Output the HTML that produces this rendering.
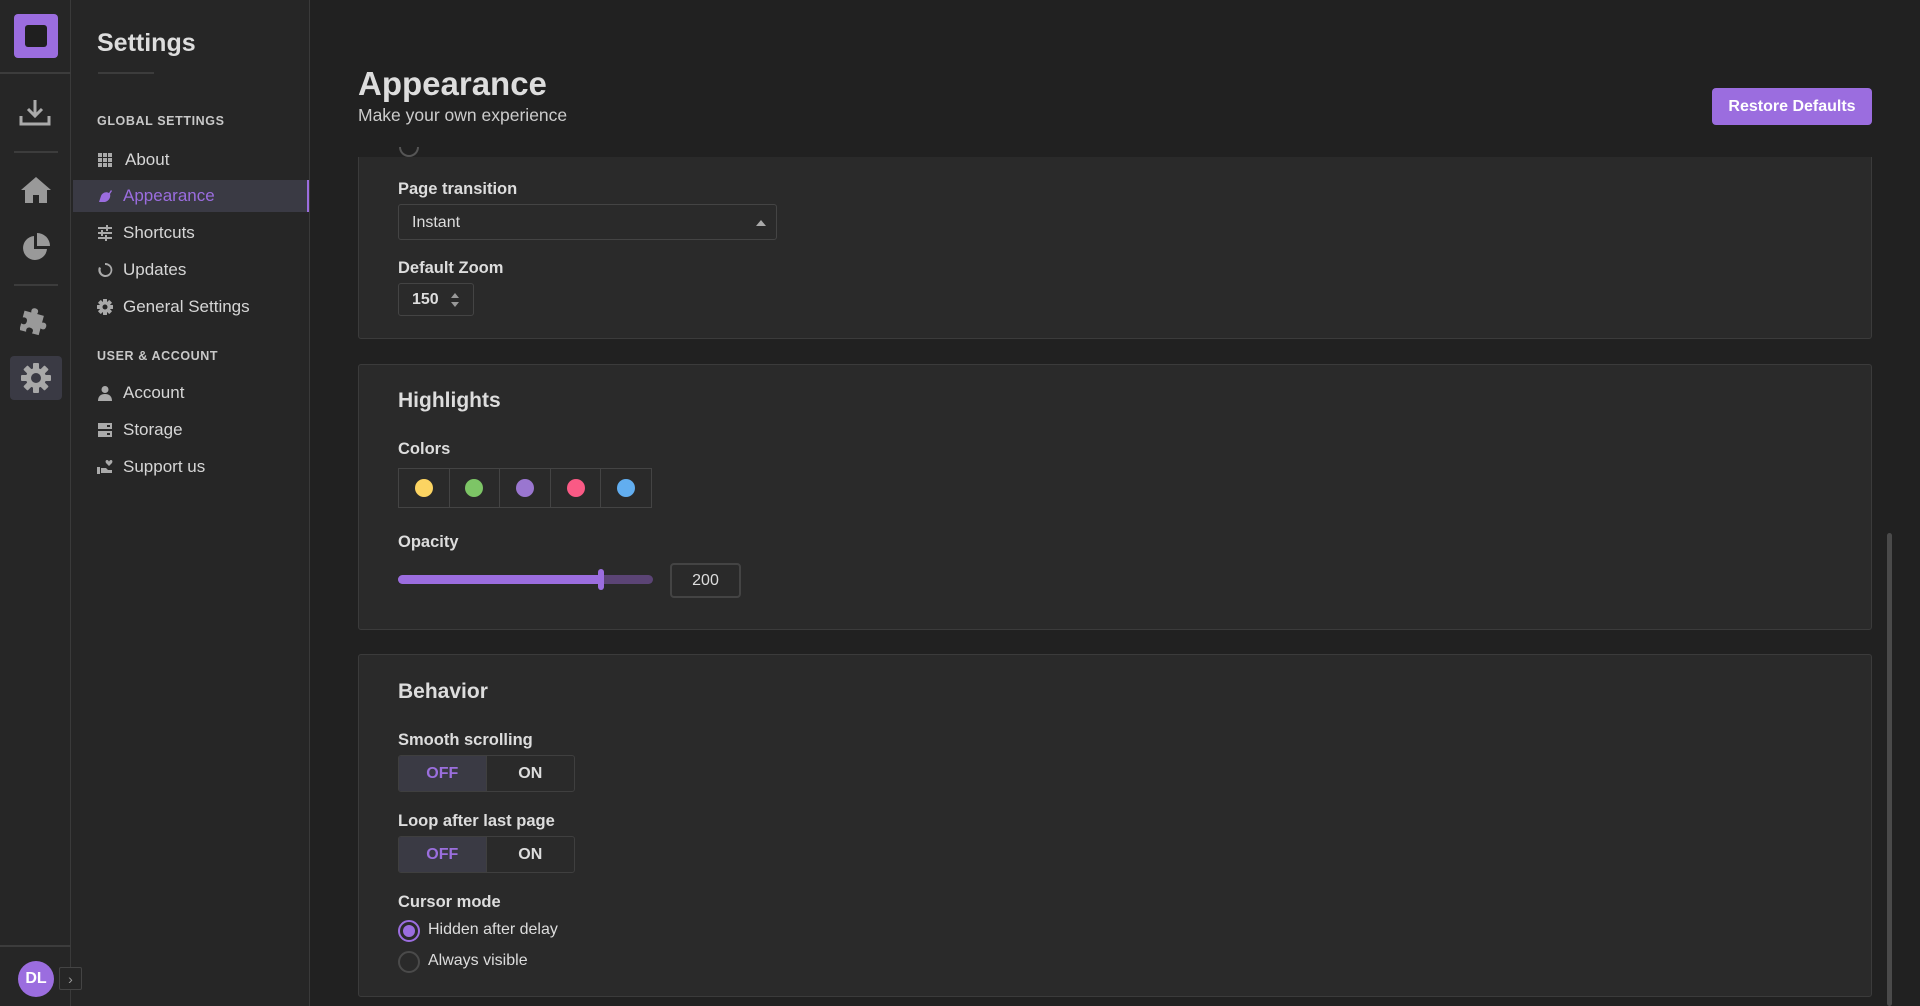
<!DOCTYPE html>
<html><head><meta charset="utf-8"><style>
*{box-sizing:border-box;margin:0;padding:0}
body{width:1920px;height:1006px;overflow:hidden;background:#212121;font-family:"Liberation Sans",sans-serif;color:#ddd;position:relative}
.rail{position:absolute;left:0;top:0;width:71px;height:1006px;background:#262626;border-right:1px solid #3a3a3a}
.side{position:absolute;left:71px;top:0;width:239px;height:1006px;background:#262626;border-right:1px solid #3a3a3a}
.abs{position:absolute}
.hr{position:absolute;background:#3c3c3c;height:2px}
.navi{position:absolute;left:97px;font-size:17px;color:#d6d6d6;display:flex;align-items:center;gap:10px}
.navi svg{width:16px;height:16px;fill:#aaa}
.sec{position:absolute;left:97px;font-size:12.5px;font-weight:bold;letter-spacing:.6px;color:#c8c8c8}
.card{position:absolute;left:358px;width:1514px;background:#2a2a2a;border:1px solid #3b3b3b;border-radius:3px}
.lbl{position:absolute;left:398px;font-size:16.5px;font-weight:bold;color:#ddd}
.h2{position:absolute;left:398px;font-size:21px;font-weight:bold;color:#ddd}
.tog{position:absolute;left:398px;width:177px;height:37px;border:1px solid #3f3f3f;border-radius:3px;display:flex;overflow:hidden}
.tog div{width:50%;display:flex;align-items:center;justify-content:center;font-weight:bold;font-size:16px;color:#ddd}
.tog div:first-child{background:#3a3a44;color:#9b6fde;border-right:1px solid #3f3f3f}
</style></head><body>
<div class="rail">
  <div class="abs" style="left:14px;top:14px;width:44px;height:44px;background:#9b6ddf;border-radius:4px"><div class="abs" style="left:11px;top:11px;width:22px;height:22px;background:#1f1f1f;border-radius:3px"></div></div>
  <div class="hr" style="left:0;top:72px;width:71px"></div>
  <svg class="abs" style="left:19px;top:98px" width="32" height="30" viewBox="0 0 32 30"><path d="M16 2v16M9 11l7 7 7-7" stroke="#aaa" stroke-width="3" fill="none"/><path d="M2 18v8h28v-8" stroke="#aaa" stroke-width="3" fill="none"/></svg>
  <div class="hr" style="left:14px;top:151px;width:44px"></div>
  <svg class="abs" style="left:20px;top:175px" width="32" height="30" viewBox="0 0 32 30"><path d="M16 2L1 15h4v13h8v-8h6v8h8V15h4z" fill="#999"/></svg>
  <svg class="abs" style="left:21px;top:232px" width="30" height="30" viewBox="0 0 30 30"><path d="M13 4a12 12 0 1 0 13 13H13z" fill="#999"/><path d="M16 1v13h13A13 13 0 0 0 16 1z" fill="#999"/></svg>
  <div class="hr" style="left:14px;top:284px;width:44px"></div>
  <svg class="abs" style="left:20px;top:306px" width="32" height="32" viewBox="0 0 32 32"><path d="M12 3c3 0 4 2 3 5h7v7c3-1 5 0 5 3s-2 4-5 3v7h-7c1-3 0-5-3-5s-4 2-3 5H2v-7c3 1 5 0 5-3s-2-4-5-3V8h7c-1-3 0-5 3-5z" fill="#999" transform="rotate(15 16 16)"/></svg>
  <div class="abs" style="left:10px;top:356px;width:52px;height:44px;background:#3a3a44;border-radius:4px"></div>
  <svg class="abs" style="left:20px;top:362px" width="32" height="32" viewBox="0 0 32 32"><g fill="#a8a8a8"><circle cx="16" cy="16" r="10"/><rect x="13" y="1" width="6" height="30" rx="1"/><rect x="13" y="1" width="6" height="30" rx="1" transform="rotate(45 16 16)"/><rect x="13" y="1" width="6" height="30" rx="1" transform="rotate(90 16 16)"/><rect x="13" y="1" width="6" height="30" rx="1" transform="rotate(135 16 16)"/></g><circle cx="16" cy="16" r="5" fill="#3a3a44"/></svg>
  <div class="hr" style="left:0;top:945px;width:71px"></div>
  <div class="abs" style="left:18px;top:961px;width:36px;height:36px;border-radius:50%;background:#9b6ddf;color:#fff;font-weight:bold;font-size:16px;display:flex;align-items:center;justify-content:center">DL</div>
</div>
<div class="side">
  <div class="abs" style="left:26px;top:29px;font-size:25px;font-weight:bold;color:#ddd">Settings</div>
  <div class="hr" style="left:27px;top:72px;width:56px"></div>
</div>
<div class="abs" style="left:59px;top:967px;width:23px;height:23px;border:1px solid #444;border-radius:2px;background:#262626;color:#999;font-size:14px;display:flex;align-items:center;justify-content:center">›</div>
<div class="sec" style="top:114px">GLOBAL SETTINGS</div>
<div class="navi" style="top:150px"><svg viewBox="0 0 16 16"><g><rect x="1" y="1" width="4" height="4"/><rect x="6" y="1" width="4" height="4"/><rect x="11" y="1" width="4" height="4"/><rect x="1" y="6" width="4" height="4"/><rect x="6" y="6" width="4" height="4"/><rect x="11" y="6" width="4" height="4"/><rect x="1" y="11" width="4" height="4"/><rect x="6" y="11" width="4" height="4"/><rect x="11" y="11" width="4" height="4"/></g></svg><span style="margin-left:2px">About</span></div>
<div class="abs" style="left:73px;top:180px;width:236px;height:32px;background:#3a3a44;border-right:2px solid #9b6ddf"></div>
<div class="navi" style="top:186px;color:#9b6ddf"><svg viewBox="0 0 16 16" style="fill:#9b6ddf"><path d="M2 14l2-6c1-3 5-5 8-3l2-3 1 1-2 3c1 3-1 7-5 8z"/></svg>Appearance</div>
<div class="navi" style="top:223px"><svg viewBox="0 0 16 16"><rect x="1" y="2" width="14" height="2"/><rect x="1" y="7" width="14" height="2"/><rect x="1" y="12" width="14" height="2"/><rect x="9" y="0" width="2" height="6"/><rect x="4" y="5" width="2" height="6"/><rect x="8" y="10" width="2" height="6"/></svg>Shortcuts</div>
<div class="navi" style="top:260px"><svg viewBox="0 0 16 16"><path d="M8 1a7 7 0 1 1-6 4l2 1a5 5 0 1 0 4-3V1z"/><circle cx="8" cy="8.5" r="3" fill="#262626"/></svg>Updates</div>
<div class="navi" style="top:297px"><svg viewBox="0 0 32 32"><g fill="#aaa"><circle cx="16" cy="16" r="11"/><rect x="12" y="0" width="8" height="32" rx="1"/><rect x="12" y="0" width="8" height="32" rx="1" transform="rotate(45 16 16)"/><rect x="12" y="0" width="8" height="32" rx="1" transform="rotate(90 16 16)"/><rect x="12" y="0" width="8" height="32" rx="1" transform="rotate(135 16 16)"/></g><circle cx="16" cy="16" r="5" fill="#262626"/></svg>General Settings</div>
<div class="sec" style="top:349px">USER &amp; ACCOUNT</div>
<div class="navi" style="top:383px"><svg viewBox="0 0 16 16"><circle cx="8" cy="4.5" r="3.5"/><path d="M1 16c0-5 3-7 7-7s7 2 7 7z"/></svg>Account</div>
<div class="navi" style="top:420px"><svg viewBox="0 0 16 16"><rect x="1" y="1" width="14" height="6"/><rect x="1" y="9" width="14" height="6"/><rect x="10" y="3" width="3" height="2" fill="#262626"/><rect x="10" y="11" width="3" height="2" fill="#262626"/></svg>Storage</div>
<div class="navi" style="top:457px"><svg viewBox="0 0 16 16"><rect x="0" y="8" width="3" height="7"/><path d="M4 9h5l2 2h4v3H4z"/><path d="M10 1c1 0 2 1 2 2 0-1 1-2 2-2 1 0 2 1 1 3l-3 3-3-3c-1-2 0-3 1-3z"/></svg>Support us</div>

<div class="card" style="top:140px;height:199px"></div>
<div class="abs" style="top:0;height:157px;background:#212121;left:311px;width:1609px"></div>
<div class="abs" style="left:358px;top:65px;font-size:33px;font-weight:bold;color:#ddd">Appearance</div>
<div class="abs" style="left:358px;top:105px;font-size:17.5px;color:#ccc">Make your own experience</div>
<div class="abs" style="left:1712px;top:88px;width:160px;height:37px;background:#9b6ddf;border-radius:4px;color:#fff;font-weight:bold;font-size:16px;display:flex;align-items:center;justify-content:center">Restore Defaults</div>
<div class="abs" style="left:399px;top:147px;width:20px;height:10px;border:2px solid #555;border-top:none;border-radius:0 0 10px 10px"></div>
<div class="lbl" style="top:180px">Page transition</div>
<div class="abs" style="left:398px;top:204px;width:379px;height:36px;border:1px solid #444;border-radius:3px;font-size:16px;color:#ddd;padding:9px 13px">Instant<span style="position:absolute;right:10px;top:15px;border:5px solid transparent;border-bottom:6px solid #aaa;border-top:none"></span></div>
<div class="lbl" style="top:259px">Default Zoom</div>
<div class="abs" style="left:398px;top:283px;width:76px;height:33px;border:1px solid #444;border-radius:3px;font-size:16px;font-weight:bold;color:#ddd;padding:7px 13px">150<span style="position:absolute;left:52px;top:9px;border:4px solid transparent;border-bottom:5px solid #999;border-top:none"></span><span style="position:absolute;left:52px;top:18px;border:4px solid transparent;border-top:5px solid #999;border-bottom:none"></span></div>

<div class="card" style="top:364px;height:266px"></div>
<div class="h2" style="top:389px">Highlights</div>
<div class="lbl" style="top:440px">Colors</div>
<div class="abs" style="left:398px;top:468px;width:254px;height:40px;border:1px solid #444;display:flex">
<div style="flex:1;border-right:1px solid #444;display:flex;align-items:center;justify-content:center"><i style="width:18px;height:18px;border-radius:50%;background:#fcd462"></i></div>
<div style="flex:1;border-right:1px solid #444;display:flex;align-items:center;justify-content:center"><i style="width:18px;height:18px;border-radius:50%;background:#7dc566"></i></div>
<div style="flex:1;border-right:1px solid #444;display:flex;align-items:center;justify-content:center"><i style="width:18px;height:18px;border-radius:50%;background:#9a76d0"></i></div>
<div style="flex:1;border-right:1px solid #444;display:flex;align-items:center;justify-content:center"><i style="width:18px;height:18px;border-radius:50%;background:#fa5a85"></i></div>
<div style="flex:1;display:flex;align-items:center;justify-content:center"><i style="width:18px;height:18px;border-radius:50%;background:#62aef0"></i></div>
</div>
<div class="lbl" style="top:533px">Opacity</div>
<div class="abs" style="left:398px;top:575px;width:255px;height:9px;border-radius:5px;background:#5b4475"></div>
<div class="abs" style="left:398px;top:575px;width:204px;height:9px;border-radius:5px;background:#9b6ddf"></div>
<div class="abs" style="left:598px;top:569px;width:6px;height:21px;border-radius:3px;background:#9b6ddf"></div>
<div class="abs" style="left:670px;top:563px;width:71px;height:35px;border:2px solid #444;border-radius:4px;font-size:16px;color:#ddd;text-align:center;line-height:31px">200</div>

<div class="card" style="top:654px;height:343px"></div>
<div class="h2" style="top:680px">Behavior</div>
<div class="lbl" style="top:731px">Smooth scrolling</div>
<div class="tog" style="top:755px"><div>OFF</div><div>ON</div></div>
<div class="lbl" style="top:812px">Loop after last page</div>
<div class="tog" style="top:836px"><div>OFF</div><div>ON</div></div>
<div class="lbl" style="top:893px">Cursor mode</div>
<div class="abs" style="left:398px;top:920px;width:22px;height:22px;border-radius:50%;border:2px solid #9b6ddf;background:#2a2a2a"><div style="margin:3px;width:12px;height:12px;border-radius:50%;background:#9b6ddf"></div></div>
<div class="abs" style="left:428px;top:921px;font-size:16px;color:#ddd">Hidden after delay</div>
<div class="abs" style="left:398px;top:951px;width:22px;height:22px;border-radius:50%;border:2px solid #4a4a4a"></div>
<div class="abs" style="left:428px;top:952px;font-size:16px;color:#ddd">Always visible</div>

<div class="abs" style="left:1887px;top:533px;width:5px;height:473px;border-radius:3px;background:#4a4a4a"></div>
</body></html>
